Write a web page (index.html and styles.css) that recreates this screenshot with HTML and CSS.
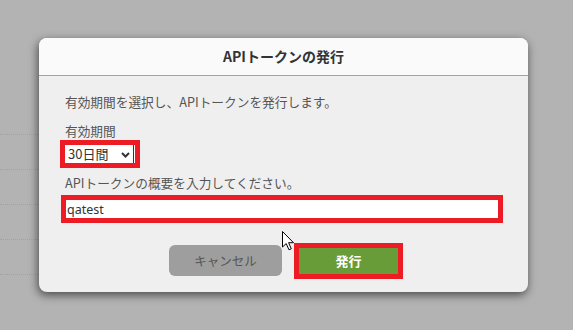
FILE: index.html
```html
<!DOCTYPE html>
<html lang="ja">
<head>
    <meta charset="UTF-8">
    <title>APIトークンの発行</title>
    <link rel="stylesheet" href="styles.css">
</head>
<body>
    <div class="page">
        <div class="bg-table">
            <div class="bg-row"></div>
            <div class="bg-row"></div>
            <div class="bg-row"></div>
            <div class="bg-row"></div>
            <div class="bg-row"></div>
        </div>
    </div>

    <div class="modal">
        <div class="modal-header">APIトークンの発行</div>
        <form class="modal-body" onsubmit="return false">
            <p class="lead">有効期間を選択し、APIトークンを発行します。</p>
            <label class="field-label" for="expire">有効期間</label>
            <div class="mark select-wrap">
                <select id="expire" class="select">
                    <option>30日間</option>
                    <option>60日間</option>
                    <option>90日間</option>
                </select>
                <svg class="chevron" width="9" height="6" viewBox="0 0 9 6">
                    <path d="M1 1 L4.5 4.5 L8 1" fill="none" stroke="#333" stroke-width="2"/>
                </svg>
            </div>
            <label class="field-label" for="summary">APIトークンの概要を入力してください。</label>
            <div class="mark input-wrap">
                <input id="summary" class="text-input" type="text" value="qatest">
            </div>
            <div class="buttons">
                <button type="button" class="btn btn-cancel">キャンセル</button>
                <button type="submit" class="btn btn-issue">発行</button>
            </div>
        </form>
    </div>

    <svg class="cursor" width="13" height="20" viewBox="0 0 13 20">
        <path d="M0.5 0.5 L0.5 16 L4.2 12.6 L7 18.8 L9.3 17.8 L6.6 11.7 L11.5 11.7 Z" fill="#fff" stroke="#000" stroke-width="1"/>
    </svg>
</body>
</html>
```

FILE: styles.css
```css
html, body {
    margin: 0;
    height: 100%;
}

body {
    background-color: #b3b3b3;
    font-family: "Noto Sans CJK JP", "Noto Sans", sans-serif;
    color: #555;
    overflow: hidden;
}

.page {
    padding-top: 100px;
}

.bg-table {
    width: 480px;
}

.bg-row {
    height: 34px;
    border-bottom: 1px dotted #a2a2a2;
}

.modal {
    position: absolute;
    left: 39px;
    top: 38px;
    width: 489px;
    background-color: #efefef;
    border-radius: 8px;
    box-shadow: -1px 3px 10px rgba(0, 0, 0, 0.6);
    overflow: hidden;
}

.modal-header {
    height: 37px;
    line-height: 37px;
    text-align: center;
    font-size: 14px;
    font-weight: bold;
    color: #333;
    background-color: #fafafa;
    border-bottom: 1px solid #a3a3a3;
}

.modal-body {
    padding: 17px 25px 16px 26px;
    font-size: 12.7px;
}

.lead {
    margin: 0 0 11px;
    line-height: 18px;
}

.field-label {
    display: block;
    line-height: 18px;
}

.mark {
    border: 5px solid #ed1c24;
    background-color: #fff;
}

.select-wrap {
    position: relative;
    width: 70px;
    height: 18px;
    margin: 0 0 6px -5px;
}

.select {
    appearance: none;
    -webkit-appearance: none;
    display: block;
    width: 69px;
    height: 18px;
    margin: 0;
    padding: 0 0 0 3px;
    border: none;
    border-right: 1px solid #333;
    background: #fff;
    font-family: inherit;
    font-size: 13px;
    line-height: 18px;
    color: #333;
}

.chevron {
    position: absolute;
    left: 56px;
    top: 7px;
    pointer-events: none;
}

.input-wrap {
    height: 18px;
    margin: 3px 0 22px -4px;
}

.text-input {
    display: block;
    width: 100%;
    height: 18px;
    box-sizing: border-box;
    margin: 0;
    padding: 0 1px;
    border: none;
    outline: none;
    background: #fff;
    font-family: "Noto Sans", sans-serif;
    font-size: 12.5px;
    color: #333;
}

.buttons {
    display: flex;
    justify-content: center;
    align-items: center;
    gap: 17px;
    padding-right: 1px;
}

.btn {
    font-family: inherit;
    border: none;
    cursor: pointer;
}

.btn-cancel {
    width: 113px;
    height: 31px;
    border-radius: 6px;
    background-color: #9e9e9e;
    color: #555;
    font-size: 12.5px;
}

.btn-issue {
    width: 99px;
    height: 26px;
    background-color: #679c38;
    color: #fff;
    font-size: 13px;
    font-weight: bold;
    outline: 5px solid #ed1c24;
}

.cursor {
    position: absolute;
    left: 282px;
    top: 231px;
}
```
